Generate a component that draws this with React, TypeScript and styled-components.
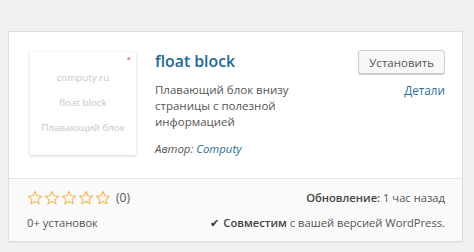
import React from "react";
import styled, { createGlobalStyle } from "styled-components";

const GlobalStyle = createGlobalStyle`
    html, body {
        margin: 0;
        padding: 0;
        background: #f1f1f1;
        font-family: "Open Sans", "Noto Sans", sans-serif;
        color: #555;
    }
`;

const Page = styled.div`
    width: 474px;
    height: 252px;
    padding: 31px 11px 0 8px;
    box-sizing: border-box;
`;

const Card = styled.div`
    background: #fff;
    border: 1px solid #dedede;
    box-shadow: 0 1px 1px rgba(0, 0, 0, 0.04);
`;

const Top = styled.div`
    display: grid;
    grid-template-columns: 106px 1fr auto;
    column-gap: 19px;
    height: 146px;
    padding: 20px 17px 0 21px;
    box-sizing: border-box;
`;

const Thumb = styled.div`
    position: relative;
    width: 106px;
    height: 103px;
    background: #fff;
    box-shadow: 0 1px 3px rgba(0, 0, 0, 0.18);
    display: flex;
    flex-direction: column;
    align-items: center;
    justify-content: center;
    gap: 9px;
    padding-bottom: 2px;
    box-sizing: border-box;
`;

const ThumbLine = styled.span`
    font-size: 9.8px;
    line-height: 16px;
    color: #c6c6c6;
`;

const Mark = styled.span`
    position: absolute;
    top: 1px;
    right: 5px;
    font-size: 8px;
    color: #d9534f;
`;

const Info = styled.div`
    display: flex;
    flex-direction: column;
`;

const Title = styled.a`
    font-size: 15.8px;
    font-weight: 600;
    line-height: 22px;
    color: #21689a;
    text-decoration: none;
    margin-top: -2px;
`;

const Desc = styled.p`
    margin: 10px 0 0;
    font-size: 11.5px;
    line-height: 16px;
    color: #555;
    max-width: 140px;
`;

const Author = styled.p`
    margin: 11px 0 0;
    font-size: 11.4px;
    font-style: italic;
    color: #555;
`;

const Link = styled.a`
    color: #2a6f9e;
    text-decoration: none;
`;

const Actions = styled.div`
    display: flex;
    flex-direction: column;
    align-items: flex-end;
    gap: 8px;
    margin-top: -2px;
    font-size: 11.7px;
    line-height: 17px;
`;

const Button = styled.button`
    height: 24px;
    padding: 0 10px;
    border: 1px solid #cfcfcf;
    border-radius: 3px;
    background: #f7f7f7;
    box-shadow: 0 1px 0 #ccc;
    font-family: inherit;
    font-size: 11.5px;
    color: #555;
`;

const Footer = styled.div`
    background: #fafafa;
    border-top: 1px solid #e3e3e3;
    padding: 9px 17px 8px 18px;
    display: grid;
    grid-template-columns: 1fr auto;
    row-gap: 6px;
    font-size: 11.2px;
    line-height: 19px;
    color: #555;
`;

const Stars = styled.div`
    display: flex;
    align-items: center;
    gap: 1px;
`;

const Count = styled.span`
    margin-left: 4px;
    font-size: 12px;
`;

const Right = styled.div`
    text-align: right;
`;

const Strong = styled.strong`
    font-weight: 600;
    color: #444;
`;

const Check = styled.span`
    font-family: "DejaVu Sans", sans-serif;
    font-size: 11px;
    color: #333;
    margin-right: 4px;
`;

const Star: React.FC = () => (
    <svg width="16" height="16" viewBox="0 0 20 20">
        <path
            d="M10 1.8l2.45 5.3 5.75.6-4.3 3.9 1.2 5.7L10 14.4l-5.1 2.9 1.2-5.7-4.3-3.9 5.75-.6z"
            fill="none"
            stroke="#f5b34a"
            strokeWidth="1.3"
            strokeLinejoin="round"
        />
    </svg>
);

const App: React.FC = () => {
    return (
        <Page>
            <GlobalStyle />
            <Card>
                <Top>
                    <Thumb>
                        <Mark>*</Mark>
                        <ThumbLine>computy.ru</ThumbLine>
                        <ThumbLine>float block</ThumbLine>
                        <ThumbLine>Плавающий блок</ThumbLine>
                    </Thumb>
                    <Info>
                        <Title href="#">float block</Title>
                        <Desc>Плавающий блок внизу страницы с полезной информацией</Desc>
                        <Author>
                            Автор: <Link href="#">Computy</Link>
                        </Author>
                    </Info>
                    <Actions>
                        <Button>Установить</Button>
                        <Link href="#">Детали</Link>
                    </Actions>
                </Top>
                <Footer>
                    <Stars>
                        <Star />
                        <Star />
                        <Star />
                        <Star />
                        <Star />
                        <Count>(0)</Count>
                    </Stars>
                    <Right>
                        <Strong>Обновление:</Strong> 1 час назад
                    </Right>
                    <div>0+ установок</div>
                    <Right>
                        <Check>✔</Check>
                        <Strong>Совместим</Strong> с вашей версией WordPress.
                    </Right>
                </Footer>
            </Card>
        </Page>
    );
};

export default App;
